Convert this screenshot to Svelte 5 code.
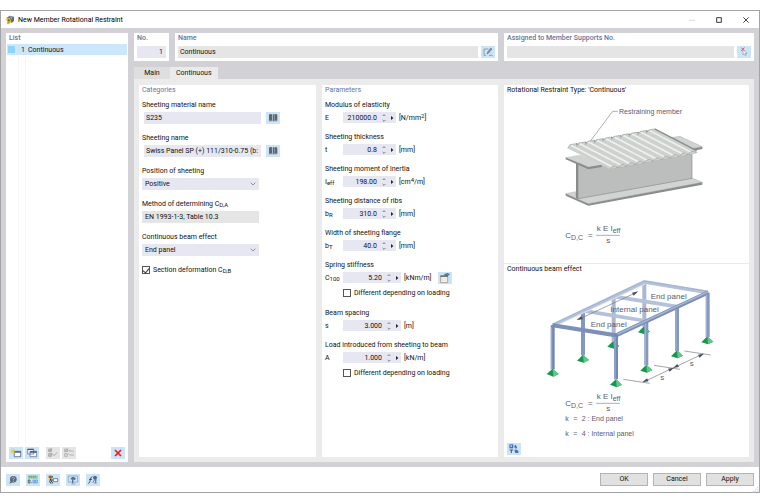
<script>
  const params = $state([
    { id: 'e', label: 'Modulus of elasticity', sym: 'E', sub: '', value: '210000.0', unit: 'N/mm', sup: '2', tail: '' },
    { id: 't', label: 'Sheeting thickness', sym: 't', sub: '', value: '0.8', unit: 'mm', sup: '', tail: '' },
    { id: 'ieff', label: 'Sheeting moment of inertia', sym: 'I', sub: 'eff', value: '198.00', unit: 'cm', sup: '4', tail: '/m' },
    { id: 'br', label: 'Sheeting distance of ribs', sym: 'b', sub: 'R', value: '310.0', unit: 'mm', sup: '', tail: '' },
    { id: 'bt', label: 'Width of sheeting flange', sym: 'b', sub: 'T', value: '40.0', unit: 'mm', sup: '', tail: '' },
    { id: 'c100', label: 'Spring stiffness', sym: 'C', sub: '100', value: '5.20', unit: 'kNm/m', sup: '', tail: '', wide: true, edit: true, varies: true },
    { id: 's', label: 'Beam spacing', sym: 's', sub: '', value: '3.000', unit: 'm', sup: '', tail: '', wide: true },
    { id: 'a', label: 'Load introduced from sheeting to beam', sym: 'A', sub: '', value: '1.000', unit: 'kN/m', sup: '', tail: '', wide: true, varies: true }
  ]);
  const ribs = Array.from({ length: 10 }, (_, i) => ({ x: 210 + i * 26.2, y: 152 - i * 4.9 }));
  const supports = [[432, 213], [340, 256], [249, 298], [622, 243], [531, 285], [439, 328], [158, 340], [348, 372]];
</script>

{#snippet book()}
  <svg viewBox="0 0 42 36" aria-hidden="true">
    <path d="M9 8l3-2 6 1v19H9zM20 7h5v20h-5zM26 6l6 1 2 2v17h-8z" fill="#62666a" />
    <path d="M8 28h26" stroke="#a0b4c4" stroke-width="2" />
  </svg>
{/snippet}

{#snippet formula(y)}
  <g class="math">
    <text x="196" y={y + 8}>C<tspan class="small" dy="6">D,C</tspan></text>
    <text x="264" y={y + 8}>=</text>
    <text x="290" y={y - 13}>k E I<tspan class="small" dy="5">eff</tspan></text>
    <path d="M288 {y}H360" stroke="#85859a" stroke-width="2" />
    <text x="319" y={y + 22}>s</text>
  </g>
{/snippet}

<main class="dialog">
  <header class="titlebar">
    <svg class="app" viewBox="0 0 30 30" aria-hidden="true">
      <path d="M5 8l9-6 13 3v13l-7 6z" fill="#5c7078" />
      <path d="M14 2l5 8M22 4l-4 9" stroke="#b9c6cc" stroke-width="2" />
      <path d="M3 12c3-5 9-4 13 0l3 10-8 6H5l2-6z" fill="#e3bb35" />
      <circle cx="11" cy="16" r="3" fill="#6c5820" />
      <path d="M8 23l5-2" stroke="#85701e" stroke-width="2" />
    </svg>
    <h1>New Member Rotational Restraint</h1>
    <nav class="window">
      <button aria-label="Minimize" disabled><svg viewBox="0 0 18 18"><path d="M0 10h18" stroke="#ddd" stroke-width="3" /></svg></button>
      <button aria-label="Maximize"><svg viewBox="0 0 18 18"><path d="M2 2h14v14H2z" fill="none" stroke="#111" stroke-width="2.5" /></svg></button>
      <button aria-label="Close"><svg viewBox="0 0 18 18"><path d="M1 1l16 16M17 1L1 17" stroke="#222" stroke-width="2.5" /></svg></button>
    </nav>
  </header>

  <div class="body">
    <aside class="panel list">
      <h2>List</h2>
      <ul>
        <li><span class="swatch"></span><span class="num">1</span>Continuous</li>
      </ul>
      <div class="lines"></div>
      <div class="tools">
        <button class="icon" aria-label="New">
          <svg viewBox="0 0 42 36"><path d="M16 13h19v16H16z" fill="#fff" stroke="#444c60" stroke-width="2" /><path d="M16 13h19v4H16z" fill="#3c5390" /><path d="M12 4v16M4 12h16M6 6l12 12M18 6L6 18" stroke="#e2c81b" stroke-width="2" /></svg>
        </button>
        <button class="icon" aria-label="Copy">
          <svg viewBox="0 0 42 36"><path d="M8 6h18v15H8zM15 13h20v16H15z" fill="#f4f8fc" stroke="#5a6478" stroke-width="2" /><path d="M8 6h18v3H8zM15 13h20v4H15z" fill="#3c5390" /></svg>
        </button>
        <button class="icon off gap" aria-label="Select all" disabled>
          <svg viewBox="0 0 42 36"><path d="M8 6h8v8H8zM8 20h8v8H8zM9 9l3 3 6-8M9 23l3 3 6-8M20 21l4 5 10-10" fill="none" stroke="#8c8c8c" stroke-width="2" /></svg>
        </button>
        <button class="icon off" aria-label="Invert selection" disabled>
          <svg viewBox="0 0 42 36"><path d="M8 6h8v8H8zM8 20h8v8H8zM9 9l3 3 6-8M20 12l4-4M20 12h12l4 4M36 24H24l-4-4" fill="none" stroke="#9a9a9a" stroke-width="2" /></svg>
        </button>
        <button class="icon end" aria-label="Delete">
          <svg viewBox="0 0 42 36"><path d="M12 9l18 18M30 9L12 27" stroke="#f01818" stroke-width="5" /></svg>
        </button>
      </div>
    </aside>

    <section class="work">
      <div class="top">
        <div class="panel no">
          <label for="no">No.</label>
          <input id="no" class="field right" value="1" />
        </div>
        <div class="panel name">
          <label for="name">Name</label>
          <div class="row">
            <input id="name" class="field gray" value="Continuous" readonly />
            <button class="icon" aria-label="Edit name">
              <svg viewBox="0 0 42 36"><path d="M22 9H9v19h6M24 28h11" fill="none" stroke="#6d7d89" stroke-width="2" /><path d="M18 24l2-6L29 6l4 3-10 12z" fill="#8a98a2" stroke="#55646f" stroke-width="1.5" /></svg>
            </button>
          </div>
        </div>
        <div class="panel assigned">
          <label for="assigned">Assigned to Member Supports No.</label>
          <div class="row">
            <input id="assigned" class="field gray" value="" readonly />
            <button class="icon" aria-label="Select supports">
              <svg viewBox="0 0 42 36"><path d="M13 5l9 10M22 5l-9 10" stroke="#e05058" stroke-width="3" /><path d="M18 11v15l4-3 3 6 3-2-3-5h5z" fill="#fff" stroke="#8a949c" stroke-width="2" /></svg>
            </button>
          </div>
        </div>
      </div>

      <div class="tabs" role="tablist">
        <button role="tab" aria-selected="false">Main</button>
        <button role="tab" aria-selected="true" class="active">Continuous</button>
      </div>

      <div class="content">
        <section class="panel categories">
          <h2>Categories</h2>
          <div class="group">
            <label for="material">Sheeting material name</label>
            <div class="row lib"><input id="material" class="field" value="S235" /><button class="icon" aria-label="Material library">{@render book()}</button></div>
          </div>
          <div class="group">
            <label for="sheeting">Sheeting name</label>
            <div class="row lib"><input id="sheeting" class="field" value="Swiss Panel SP (+) 111/310-0.75 (b: 1000)" /><button class="icon" aria-label="Sheeting library">{@render book()}</button></div>
          </div>
          <div class="group">
            <label for="position">Position of sheeting</label>
            <div class="combo">
              <select id="position" class="field"><option>Positive</option><option>Negative</option></select>
              <svg viewBox="0 0 18 12" aria-hidden="true"><path d="M2 2l7 7 7-7" fill="none" stroke="#666" stroke-width="2" /></svg>
            </div>
          </div>
          <div class="group">
            <label for="method">Method of determining C<sub>D,A</sub></label>
            <div class="combo"><input id="method" class="field gray" value="EN 1993-1-3, Table 10.3" readonly /></div>
          </div>
          <div class="group">
            <label for="effect">Continuous beam effect</label>
            <div class="combo">
              <select id="effect" class="field"><option>End panel</option><option>Internal panel</option></select>
              <svg viewBox="0 0 18 12" aria-hidden="true"><path d="M2 2l7 7 7-7" fill="none" stroke="#666" stroke-width="2" /></svg>
            </div>
          </div>
          <label class="check"><input type="checkbox" checked /><span>Section deformation C<sub>D,B</sub></span></label>
        </section>

        <section class="panel parameters">
          <h2>Parameters</h2>
          {#each params as p (p.id)}
            <div class="group">
              <label for={p.id}>{p.label}</label>
              <div class="row value">
                <span class="sym">{p.sym}<sub>{p.sub}</sub></span>
                <span class="spin" class:wide={p.wide}>
                  <input id={p.id} class="field right" bind:value={p.value} />
                  <button aria-label="Step {p.label}"><svg viewBox="0 0 12 24"><path d="M2 6l4-4 4 4M2 18l4 4 4-4" fill="none" stroke="#444" stroke-width="2" /></svg></button>
                  <button aria-label="More for {p.label}"><svg viewBox="0 0 12 24"><path d="M3 6l7 6-7 6z" fill="#222" /></svg></button>
                </span>
                <span class="unit">[{p.unit}<sup>{p.sup}</sup>{p.tail}]</span>
                {#if p.edit}
                  <button class="icon calc" aria-label="Calculate stiffness">
                    <svg viewBox="0 0 42 36"><path d="M8 12h21v20H8z" fill="#f5f2ec" stroke="#8d8478" stroke-width="2" /><path d="M7 10h23v5H7z" fill="#8a6f58" /><path d="M18 7l10-4 8 3-3 4-12 4z" fill="#527a98" /><path d="M12 20h4M20 20h4M12 26h4M20 26h4" stroke="#d5cec4" stroke-width="2" /></svg>
                  </button>
                {/if}
              </div>
              {#if p.varies}
                <label class="check"><input type="checkbox" /><span>Different depending on loading</span></label>
              {/if}
            </div>
          {/each}
        </section>

        <section class="panel pictures">
          <figure>
            <figcaption>Rotational Restraint Type: 'Continuous'</figcaption>
            <svg viewBox="12 9 735 495" role="img" aria-label="Restraining member on a beam">
              <path d="M500 130L540 124 607 155 560 164z" fill="#d0d3d2" stroke="#909392" />
              <path d="M560 164L607 155V162L567 170z" fill="#8a8d8c" />
              <path d="M197 296L228 290V306L240 311 576 249 607 262 265 326z" fill="#d1d4d3" stroke="#929594" />
              <path d="M197 296L265 326 607 262V269L265 332 197 302z" fill="#8a8d8c" />
              <path d="M234 200L576 160V250L234 311z" fill="#bbbebd" />
              <path d="M576 170V250L234 311" fill="none" stroke="#8b8e8d" stroke-width="2" />
              <path d="M228 204h7v107h-7z" fill="#898c8b" />
              <path d="M197 187L240 179 320 208 265 216z" fill="#d0d3d2" />
              <path d="M197 187L265 216 305 209V216L265 223 197 193z" fill="#8a8d8c" />
              <path d="M204 160L452 106 592 174 336 223z" fill="#acb0ae" />
              {#each ribs as r}
                <path d="M{r.x - 7} {r.y + 8}L{r.x} {r.y - 3} {r.x + 16} {r.y - 6} {r.x + 144} {r.y + 58} {r.x + 136} {r.y + 68} {r.x + 120} {r.y + 70}z" fill="#cdd2cf" />
                <path d="M{r.x + 3} {r.y - 1}L{r.x + 126} {r.y + 63}" stroke="#eef1ef" stroke-width="5" />
                <path d="M{r.x + 18} {r.y - 6}L{r.x + 144} {r.y + 59}" stroke="#888d8a" stroke-width="4" />
                <path d="M{r.x - 7} {r.y + 8}L{r.x} {r.y - 3} {r.x + 17} {r.y - 6}M{r.x + 120} {r.y + 70}l6 -7 14 -3 6 6" fill="none" stroke="#9ea3a0" stroke-width="2" />
              {/each}
              <path d="M272 137L338 49H353" fill="none" stroke="#888" stroke-width="2" />
              <text x="357" y="57">Restraining member</text>
              {@render formula(421)}
            </svg>
          </figure>
          <figure>
            <figcaption>Continuous beam effect</figcaption>
            <svg viewBox="12 45 735 498" role="img" aria-label="Frame with end and internal panels">
              {#each supports.slice(0, 6) as [x, y]}
                <path d="M{x} {y - 20}L{x - 18} {y - 2} {x + 2} {y + 4} {x + 18} {y - 4}z" fill="#15984e" />
                <path d="M{x} {y - 20}L{x + 2} {y + 4} {x + 18} {y - 4}z" fill="#63c68c" />
              {/each}
              <g stroke="#aab8d4" stroke-width="12">
                <path d="M433 62V195M341 104V238" />
              </g>
              <g stroke="#8497bf" stroke-width="12">
                <path d="M249 148V280M623 92V225M531 138V267M439 180V310" />
              </g>
              <g stroke="#b4c1da" stroke-width="11">
                <path d="M158 190L433 60L623 91M341 103L531 134M249 146L439 177" fill="none" />
              </g>
              <path d="M158 187L433 57L623 88" fill="none" stroke="#8797b8" />
              <path d="M160 195L435 66" stroke="#dee5f0" stroke-width="3" />
              <path d="M158 190L348 220L625 91" fill="none" stroke="#7b8fb8" stroke-width="12" />
              <path d="M350 218L625 89" stroke="#a9b7d3" stroke-width="4" />
              <path d="M158 190V322M348 217V352" stroke="#7388b5" stroke-width="12" />
              <path d="M155 196V322M345 224V352M436 184V310M528 142V267M620 98V225" stroke="#a6b5d3" stroke-width="3" />
              {#each supports.slice(6) as [x, y]}
                <path d="M{x} {y - 20}L{x - 18} {y - 4} {x + 2} {y + 4} {x + 18} {y - 4}z" fill="#15984e" />
                <path d="M{x} {y - 20}L{x + 2} {y + 4} {x + 18} {y - 4}z" fill="#63c68c" />
              {/each}
              <g stroke="#777783" stroke-width="2">
                <path d="M236 172L410 91M430 360L608 276M370 352L449 364M462 310L540 322M553 267L632 279" />
              </g>
              <path d="M230 174l14-12 5 10zM415 88l-19 4 5 9zM427 361l14-12 5 9zM522 317l-18 3 5 9zM519 318l13-12 5 9zM612 275l-18 3 5 9z" fill="#505060" />
              <g class="big">
                <text x="452" y="111">End panel</text>
                <text x="331" y="151">Internal panel</text>
                <text x="272" y="195">End panel</text>
                <text x="481" y="355">s</text>
                <text x="569" y="313">s</text>
              </g>
              {@render formula(424)}
              <text x="196" y="478">k</text><text x="220" y="478">=</text><text x="245" y="478">2 : End panel</text>
              <text x="196" y="522">k</text><text x="220" y="522">=</text><text x="245" y="522">4 : Internal panel</text>
            </svg>
          </figure>
          <button class="icon pic" aria-label="Picture settings">
            <svg viewBox="0 0 42 36"><path d="M7 4h12v12H7z" fill="#3d6fd0" /><path d="M10 7h5v5h-5z" fill="#a9c7f5" /><path d="M8 21h10M13 21v9M25 6v6M22 12h8M27 12v5" stroke="#4b5668" stroke-width="3" /><path d="M22 20h6l6 3v7h-9z" fill="#4a6fae" /></svg>
          </button>
        </section>
      </div>
    </section>
  </div>

  <footer>
    <div class="helpers">
      <button class="icon" aria-label="Help"><svg viewBox="0 0 42 36"><circle cx="22" cy="16" r="10" fill="#5d6b76" /><path d="M14 20l-4 9 10-4z" fill="#5d6b76" /><path d="M18 13c1-5 9-3 7 1l-3 3v2M22 21v3" fill="none" stroke="#d5dde3" stroke-width="2" /></svg></button>
      <button class="icon" aria-label="Units"><svg viewBox="0 0 42 36"><path d="M6 5h29v9H6z" fill="#8fc79b" /><path d="M10 5v5M16 5v5M22 5v5M28 5v5" stroke="#4b8b5b" stroke-width="2" /><path d="M7 18h5v9H7zM15 26h2" fill="none" stroke="#333" stroke-width="2" /><path d="M21 18h5v9h-5zM29 18h5v9h-5z" fill="none" stroke="#4c80df" stroke-width="2" /></svg></button>
      <button class="icon" aria-label="Colors"><svg viewBox="0 0 42 36"><path d="M8 5h7v7H8z" fill="#e03b2d" /><path d="M15 5h6v7h-6z" fill="#36a445" /><path d="M8 12h7v6H8z" fill="#e8c72d" /><path d="M15 13l-4 10 4 6M15 19l5 9M15 18h8" fill="none" stroke="#333" stroke-width="3" /><path d="M22 14h13v9H22z" fill="#fff" stroke="#445070" stroke-width="2" /></svg></button>
      <button class="icon" aria-label="Display"><svg viewBox="0 0 42 36"><path d="M7 6h28v18H7zM16 30h12" fill="none" stroke="#8095a8" stroke-width="2" /><path d="M13 14c5-7 12-7 17 0l-5 5-3-3v12h-4V15l-2 2z" fill="#4f7399" /></svg></button>
      <button class="icon" aria-label="Formula"><svg viewBox="0 0 42 36"><path d="M7 28c6 1 5-20 12-20M9 16h9" fill="none" stroke="#333" stroke-width="2.5" /><circle cx="27" cy="11" r="6" fill="#4b679c" /><path d="M20 27l5-9M25 18h7M25 27h7M29 17v10" stroke="#435879" stroke-width="2" /></svg></button>
    </div>
    <div class="actions">
      <button>OK</button>
      <button>Cancel</button>
      <button>Apply</button>
    </div>
    <svg class="grip" viewBox="0 0 18 18" aria-hidden="true"><path d="M13 2h3v3h-3zM13 8h3v3h-3zM13 14h3v3h-3zM7 8h3v3H7zM7 14h3v3H7zM1 14h3v3H1z" fill="#bbb" /></svg>
  </footer>
</main>

<style>
  :global(body) { margin: 0; background: #fff; }
  .dialog, .dialog :is(button, input, select) { font-family: Roboto, "Open Sans", sans-serif; font-size: 7px; color: #111; }
  .dialog * { box-sizing: border-box; }
  .dialog { box-sizing: border-box; display: flex; flex-direction: column; margin: 10px 0; min-height: calc(100vh - 20px); border: 1px solid #a4a4a6; line-height: 12px; white-space: nowrap; }
  button { padding: 0; border: 0; background: none; line-height: 12px; }
  svg { display: block; }
  h1, h2, ul, figure { margin: 0; padding: 0; font-weight: 400; }
  .titlebar { display: flex; align-items: center; height: 17px; padding-left: 4px; }
  .app { width: 10px; height: 10px; margin-right: 3px; }
  h1 { font-size: 7px; color: #000; }
  .window { display: flex; margin-left: auto; }
  .window button { width: 27px; height: 16px; display: grid; place-items: center; }
  .window svg { width: 6px; height: 6px; }
  .body { flex: 1; display: flex; gap: 6px; padding: 5px; background: #d1d1d6; }
  .panel { background: #fff; }
  h2, .top label { display: block; font-size: 7px; line-height: 11px; font-weight: 500; color: #66749a; padding-left: 3px; }
  .list { flex: 120 1 0; display: flex; flex-direction: column; padding: 0 1px; }
  .list h2 { padding-left: 2px; }
  ul { list-style: none; }
  li { display: flex; align-items: center; height: 11px; background: #cce6fd; }
  .swatch { width: 7px; height: 7px; margin-left: 1px; background: #8bd5f5; }
  .num { width: 10px; margin-right: 3px; text-align: right; }
  .lines { flex: 1; width: 8px; margin-left: 11px; border: solid #f6f6f6; border-width: 0 1px; }
  .tools { display: flex; gap: 2px; padding: 3px 2px; }
  .icon { flex: none; width: 14px; height: 12px; background: #cbe4f8; }
  .icon svg { width: 14px; height: 12px; }
  .off { background: #e5e5e5; }
  .gap { margin-left: 5px; }
  .end { margin-left: auto; }
  .work { flex: 620 1 0; display: flex; flex-direction: column; min-width: 0; }
  .top { display: flex; gap: 6px; }
  .top .panel { height: 28px; padding: 0 3px; }
  .top label { padding: 0; height: 13px; }
  .no { flex: 29 1 0; }
  .name { flex: 317 1 0; }
  .assigned { flex: 244 1 0; }
  .row { display: flex; align-items: center; gap: 3px; }
  .field { display: block; width: 100%; min-width: 0; height: 12px; padding: 0 2px; border: 0; border-radius: 0; outline: 0; background: #e7e7f2; appearance: none; }
  .gray { background: #e5e5e5; }
  .right { text-align: right; padding-right: 3px; }
  .tabs { display: flex; margin-top: 6px; }
  .tabs button { height: 12px; padding: 0 6px; background: #dedede; min-width: 36px; }
  .tabs .active { background: #ebebeb; }
  .content { flex: 1; display: flex; gap: 6px; padding: 6px 5px 5px; background: #ebebeb; }
  .categories { flex: 177 1 0; min-width: 0; }
  .parameters { flex: 176 1 0; min-width: 0; }
  .pictures { flex: 245 1 0; min-width: 0; display: flex; flex-direction: column; }
  .content h2 { margin-bottom: 3px; font-weight: 400; }
  .group { padding: 0 3px; margin-bottom: 8px; }
  .group > label:first-child { display: block; height: 13px; line-height: 13px; }
  .categories .group { height: 25px; }
  sub, sup { font-size: 6px; line-height: 0; }
  sub { vertical-align: -1px; }
  sup { vertical-align: 2px; }
  .lib { padding-left: 2px; gap: 5px; }
  .lib .field { width: 117px; }
  .combo { display: flex; align-items: center; width: 117px; }
  .combo .field { padding-left: 3px; }
  .combo svg { width: 6px; height: 4px; margin-left: -9px; pointer-events: none; }
  .check { display: flex; align-items: center; gap: 3px; height: 12px; margin-left: 3px; }
  .check input { appearance: none; width: 8px; height: 8px; margin: 0; border: 1px solid #555; background: #fff; display: grid; place-items: center; }
  .check input:checked::before { content: ""; width: 3px; height: 5px; border: solid #333; border-width: 0 1px 1px 0; transform: rotate(40deg); }
  .group .check { margin: 4px 0 0 18px; }
  .value { height: 11px; }
  .sym { width: 15px; }
  .spin { display: flex; width: 53px; height: 11px; background: #e7e7f2; }
  .spin.wide { width: 58px; }
  .spin .field { flex: 1; height: 11px; background: none; }
  .spin button { width: 8px; height: 11px; display: grid; place-items: center; }
  .spin svg { width: 4px; height: 8px; }
  .calc { margin-left: 4px; }
  figcaption { height: 13px; padding-left: 3px; line-height: 11px; }
  figure + figure { border-top: 1px solid #ebebeb; }
  figure svg { width: 245px; max-width: 100%; }
  figure text { font-family: "Liberation Sans", Arial, sans-serif; font-size: 21px; fill: #5b5b72; }
  .math text, .big text { font-size: 24px; }
  .math .small { font-size: 21px; }
  .pic { margin: 0 3px 2px; }
  footer { display: flex; align-items: center; height: 25px; padding: 0 0 0 5px; background: #fff; position: relative; }
  .helpers { display: flex; gap: 6px; }
  .actions { display: flex; gap: 5px; margin-left: auto; padding-right: 5px; }
  .actions button { width: 48px; height: 13px; background: #e1e1e1; border: 1px solid #b4b4b4; line-height: 11px; }
  .grip { position: absolute; right: 0; bottom: 0; width: 6px; height: 6px; }
</style>
